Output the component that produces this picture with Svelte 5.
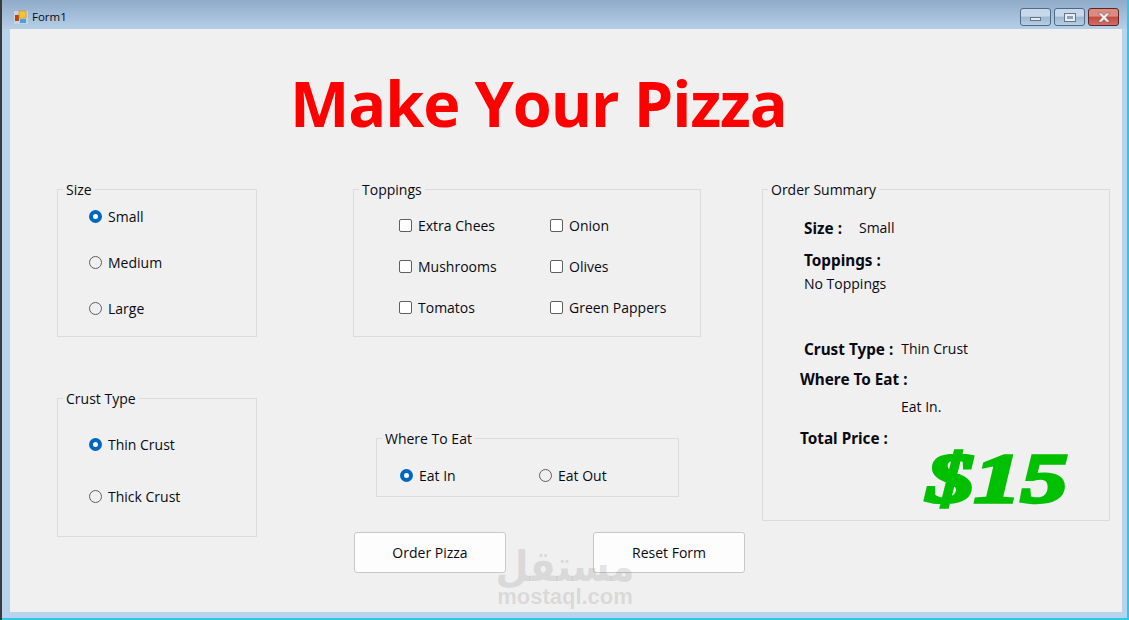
<script>
    let sizes = [
        { name: "Small", checked: true },
        { name: "Medium", checked: false },
        { name: "Large", checked: false }
    ];
    let crusts = [
        { name: "Thin Crust", checked: true },
        { name: "Thick Crust", checked: false }
    ];
    let toppings = ["Extra Chees", "Onion", "Mushrooms", "Olives", "Tomatos", "Green Pappers"];
    let places = [
        { name: "Eat In", checked: true },
        { name: "Eat Out", checked: false }
    ];
</script>

<div class="window">
    <header class="titlebar">
        <svg class="app_icon" width="16" height="16" viewBox="0 0 16 16">
            <rect x="1" y="2" width="14" height="13" fill="#c9d3dc" />
            <rect x="2" y="6" width="4" height="6" fill="#c2410c" />
            <rect x="6" y="2" width="7" height="7" fill="#f7c531" stroke="#c98a12" stroke-width="0.6" />
            <rect x="7" y="10" width="6" height="4" fill="#4b9fdf" />
        </svg>
        <span class="caption">Form1</span>
        <div class="controls">
            <div class="ctl"><span class="min"></span></div>
            <div class="ctl"><span class="max"></span></div>
            <div class="ctl close">
                <svg width="14" height="11" viewBox="0 0 14 11">
                    <path d="M1 1h3.5L7 3.6 9.5 1H13L9 5.5 13 10H9.5L7 7.4 4.5 10H1L5 5.5z" fill="#f2f2f2" stroke="#6d5a5a" stroke-width="0.6" />
                </svg>
            </div>
        </div>
    </header>

    <main class="client">
        <h1>Make Your Pizza</h1>
        <div class="columns">
            <div class="col">
                <section class="group size">
                    <h2>Size</h2>
                    {#each sizes as s}
                        <label class="opt"><input type="radio" name="size" checked={s.checked} />{s.name}</label>
                    {/each}
                </section>
                <section class="group crust">
                    <h2>Crust Type</h2>
                    {#each crusts as c}
                        <label class="opt"><input type="radio" name="crust" checked={c.checked} />{c.name}</label>
                    {/each}
                </section>
            </div>

            <div class="col">
                <section class="group toppings">
                    <h2>Toppings</h2>
                    {#each toppings as t}
                        <label class="opt"><input type="checkbox" />{t}</label>
                    {/each}
                </section>
                <section class="group where">
                    <h2>Where To Eat</h2>
                    {#each places as p}
                        <label class="opt"><input type="radio" name="where" checked={p.checked} />{p.name}</label>
                    {/each}
                </section>
                <div class="buttons">
                    <button type="button">Order Pizza</button>
                    <button type="button">Reset Form</button>
                </div>
            </div>

            <section class="group summary">
                <h2>Order Summary</h2>
                <div class="line l_size"><b>Size :</b><span>Small</span></div>
                <div class="line l_top"><b>Toppings :</b></div>
                <div class="line l_none">No Toppings</div>
                <div class="line l_crust"><b>Crust Type :</b><span>Thin Crust</span></div>
                <div class="line l_where"><b>Where To Eat :</b></div>
                <div class="line l_eat">Eat In.</div>
                <div class="line l_total"><b>Total Price :</b></div>
                <div class="price"><span>$15</span></div>
            </section>
        </div>
        <div class="watermark">
            <span class="ar" dir="rtl">مستقل</span>
            <span class="en">mostaql.com</span>
        </div>
    </main>
    <div class="edge"></div>
</div>

<style>
:global(body) {
    margin: 0;
    overflow: hidden;
    background: #0c0c0c;
}
.window {
    width: 1129px;
    height: 620px;
    display: flex;
    flex-direction: column;
    background: #b9d3ec;
    font-family: "Open Sans", "Noto Sans", sans-serif;
    font-size: 14px;
    color: #0a0a14;
    box-sizing: border-box;
    border-left: 2px solid #3a3a3a;
    border-right: 2px solid #2cc9e6;
}
.titlebar {
    height: 29px;
    flex: none;
    box-sizing: border-box;
    display: flex;
    align-items: center;
    padding: 4px 0 0 11px;
    background: linear-gradient(#8fabc9, #b6cfe8);
    font-size: 11.5px;
}
.app_icon {
    margin-right: 3px;
}
.controls {
    align-self: flex-start;
    margin: 4px 8px 0 auto;
    display: flex;
    gap: 3px;
}
.ctl {
    width: 31px;
    height: 18px;
    box-sizing: border-box;
    border: 1px solid #4f6a85;
    border-radius: 3px;
    background: linear-gradient(#c6d8ea 0 45%, #9db8d2 50%, #b7cee4);
    display: flex;
    align-items: center;
    justify-content: center;
}
.ctl .min {
    width: 9px;
    height: 2px;
    margin-top: 3px;
    background: #e8e8e8;
    border: 1px solid #63758a;
}
.ctl .max {
    width: 6px;
    height: 3px;
    background: #8aa2ba;
    border: 2px solid #e9eef4;
    outline: 1px solid #63758a;
}
.close {
    border-color: #5a2626;
    background: linear-gradient(#dd8a80 0 45%, #c4493a 50%, #d0706a);
}
.client {
    position: relative;
    flex: 1;
    margin: 0 5px 0 8px;
    background: #f0f0f0;
    min-height: 0;
}
.edge {
    height: 8px;
    flex: none;
    border-bottom: 2px solid #2cc9e6;
    box-sizing: border-box;
}
h1 {
    margin: 0;
    height: 160px;
    box-sizing: border-box;
    padding: 36px 0 0 280px;
    color: #ff0000;
    font-family: "Open Sans", "Noto Sans", sans-serif;
    font-size: 63px;
    font-weight: 700;
    letter-spacing: -1.1px;
    line-height: 76px;
    white-space: nowrap;
}
.columns {
    display: grid;
    grid-template-columns: 296px 409px 348px;
    padding-left: 47px;
}
.group {
    position: relative;
    border: 1px solid #dcdcdc;
    box-sizing: border-box;
}
h2 {
    position: absolute;
    left: 5px;
    top: -10px;
    margin: 0;
    padding: 0 3px;
    line-height: 19px;
    background: #f0f0f0;
    font-size: 14px;
    font-weight: 400;
    white-space: nowrap;
}
.opt {
    display: flex;
    align-items: center;
    gap: 6px;
    height: 20px;
    white-space: nowrap;
}
input {
    appearance: none;
    margin: 0;
    width: 13px;
    height: 13px;
    flex: none;
    background: #fff;
    border: 1px solid #5f5f5f;
    box-sizing: border-box;
}
input[type="radio"] {
    border-radius: 50%;
    background: transparent;
}
input[type="radio"]:checked {
    background: #fff;
    border: 4px solid #0067c0;
}
input[type="checkbox"] {
    border-radius: 2px;
}
.col > .group {
    width: 200px;
}
.size {
    height: 148px;
    padding: 16px 0 0 31px;
    display: grid;
    grid-auto-rows: 20px;
    row-gap: 26px;
    align-content: start;
}
.col > .crust {
    height: 139px;
    margin-top: 61px;
    padding: 35px 0 0 31px;
    display: grid;
    grid-auto-rows: 20px;
    row-gap: 32px;
    align-content: start;
}
.col > .toppings {
    width: 348px;
    height: 148px;
    padding: 25px 0 0 45px;
    display: grid;
    grid-template-columns: 151px 1fr;
    grid-auto-rows: 20px;
    row-gap: 21px;
    align-content: start;
}
.col > .where {
    width: 303px;
    height: 59px;
    margin: 101px 0 0 23px;
    padding: 26px 0 0 23px;
    display: grid;
    grid-template-columns: 139px 1fr;
    grid-auto-rows: 20px;
}
.buttons {
    display: flex;
    gap: 87px;
    margin: 35px 0 0 1px;
}
button {
    width: 152px;
    height: 41px;
    flex: none;
    border: 1px solid #c8c8c8;
    border-radius: 3px;
    background: #fdfdfd;
    font: inherit;
    color: inherit;
    padding: 0;
}
.summary {
    height: 332px;
}
.line {
    display: flex;
    height: 20px;
    line-height: 20px;
    padding-left: 41px;
    white-space: nowrap;
}
b {
    font-family: "Noto Sans", sans-serif;
    font-size: 15.3px;
    font-weight: 700;
}
.l_size { margin-top: 28px; }
.l_size span { margin-left: 17px; }
.l_top { margin-top: 12px; }
.l_none { margin-top: 4px; }
.l_crust { margin-top: 45px; }
.l_crust span { margin-left: 8px; }
.l_where { margin-top: 10px; padding-left: 37px; }
.l_eat { margin-top: 8px; padding-left: 138px; }
.l_total { margin-top: 11px; padding-left: 37px; }
.price {
    position: absolute;
    left: 164px;
    top: 251px;
    line-height: 76px;
    height: 76px;
}
.price span {
    display: inline-block;
    font-family: "Liberation Serif", serif;
    font-style: italic;
    font-weight: 700;
    font-size: 70px;
    color: #00c000;
    -webkit-text-stroke: 3.5px #00c000;
    transform: scaleX(1.34);
    transform-origin: left center;
}
.watermark {
    position: absolute;
    left: 487px;
    top: 518px;
    width: 136px;
    display: flex;
    flex-direction: column;
    align-items: center;
    color: rgba(120, 120, 120, 0.2);
    pointer-events: none;
    font-family: "DejaVu Sans", sans-serif;
    font-weight: 700;
}
.ar {
    font-size: 38px;
    line-height: 38px;
    transform: scaleY(1.12);
}
.en {
    margin-top: 2px;
    font-family: "Liberation Sans", sans-serif;
    font-size: 22px;
    line-height: 20px;
}
</style>
